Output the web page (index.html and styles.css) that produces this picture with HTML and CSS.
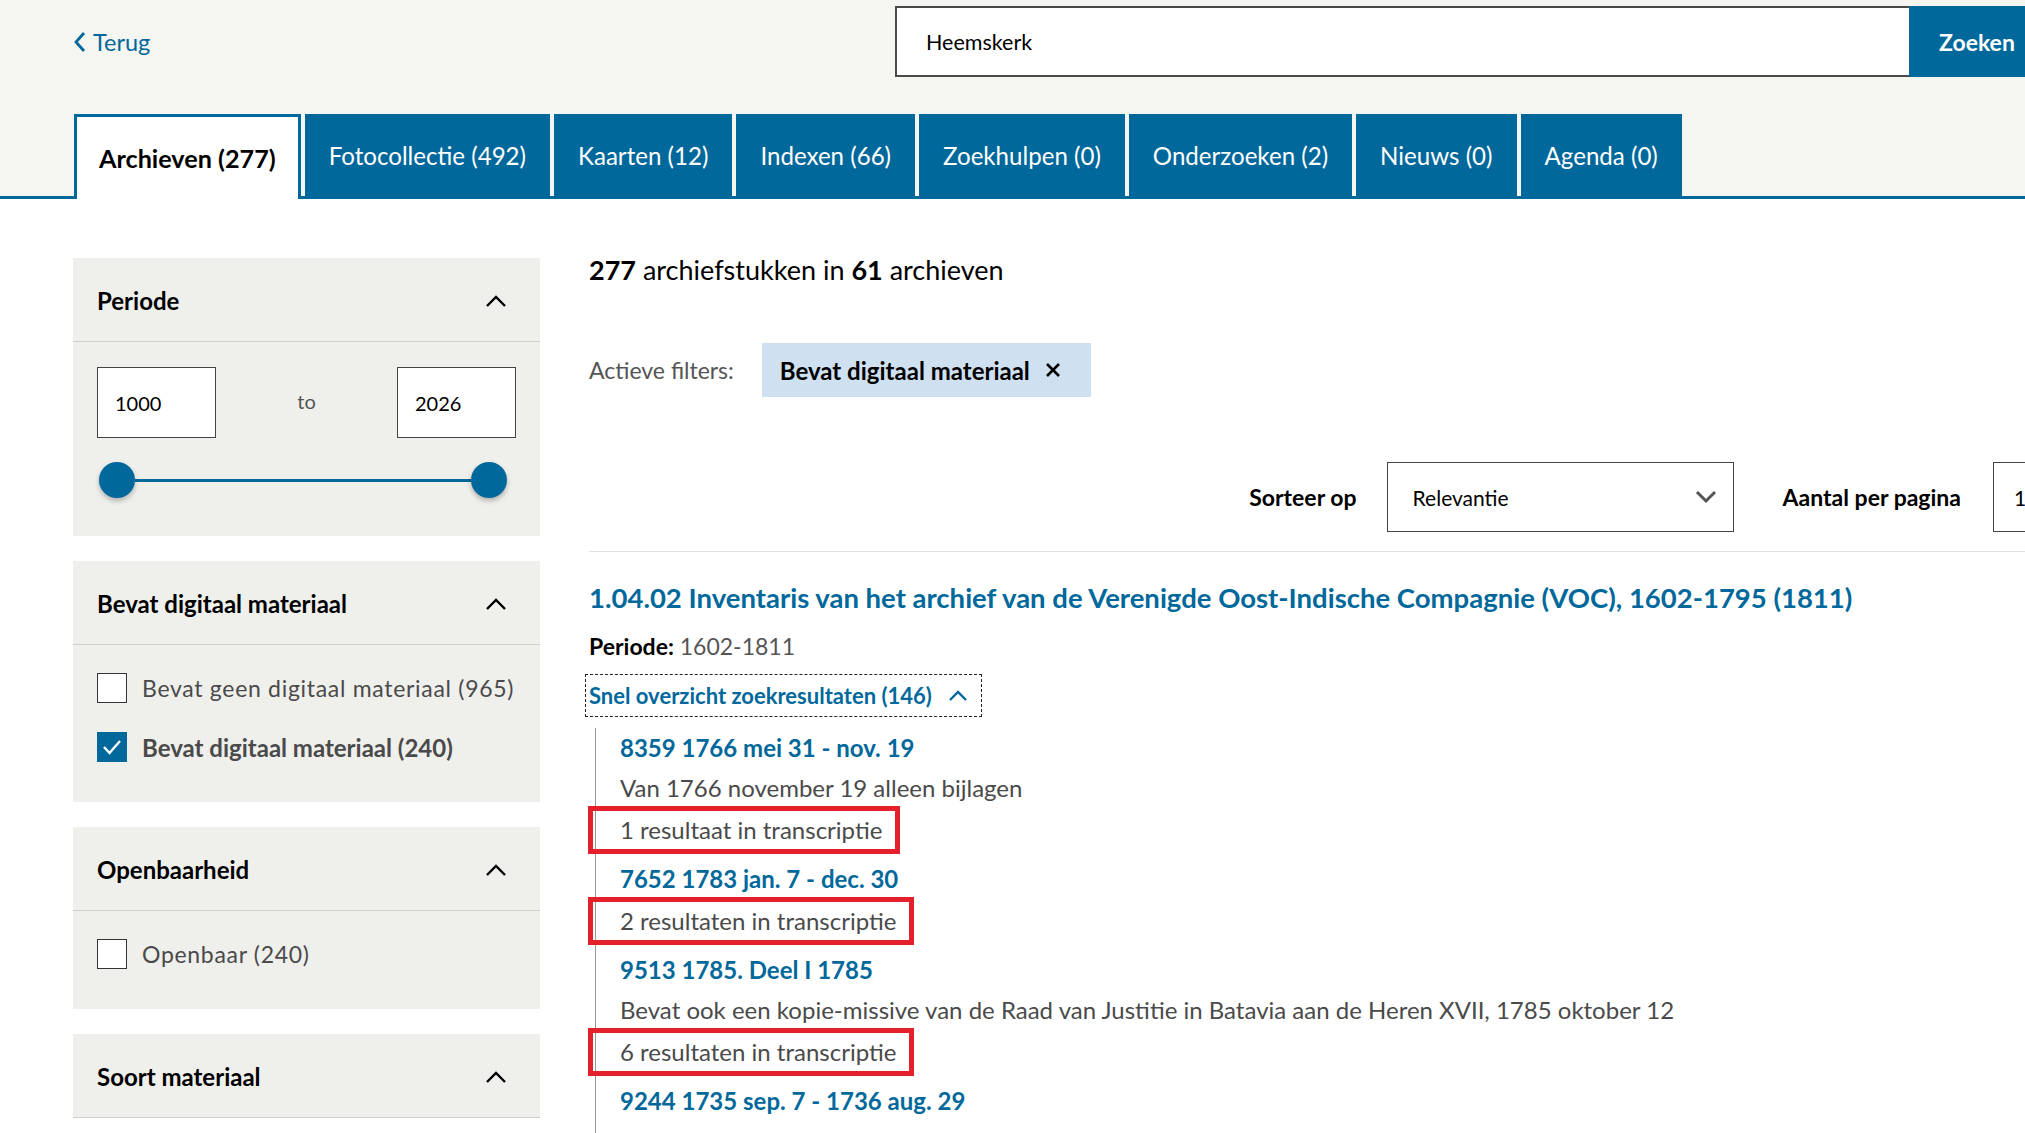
FILE: index.html
```html
<!DOCTYPE html>
<html lang="nl">
<head>
  <meta charset="UTF-8" />
  <meta name="viewport" content="width=device-width, initial-scale=1.0" />
  <title>Zoeken - Heemskerk</title>
  <link rel="stylesheet" href="styles.css">
</head>
<body>
  <div class="top">
    <div class="topbar">
      <a class="back" href="#">
        <svg width="13" height="22" viewBox="0 0 13 22"><polyline points="11,2 3,11 11,20" fill="none" stroke="#01689b" stroke-width="2.8"/></svg>
        Terug
      </a>
      <form class="search">
        <input type="text" value="Heemskerk" />
        <button type="button">Zoeken</button>
      </form>
    </div>
    <ul class="tabs">
      <li class="tab active">Archieven (277)</li>
      <li class="tab">Fotocollectie (492)</li>
      <li class="tab">Kaarten (12)</li>
      <li class="tab">Indexen (66)</li>
      <li class="tab">Zoekhulpen (0)</li>
      <li class="tab">Onderzoeken (2)</li>
      <li class="tab">Nieuws (0)</li>
      <li class="tab">Agenda (0)</li>
    </ul>
  </div>

  <main class="page">
    <aside class="filters">
      <section class="panel">
        <div class="panel-head">Periode
          <svg class="up" width="22" height="14" viewBox="0 0 22 14"><polyline points="2,12 11,3 20,12" fill="none" stroke="#000" stroke-width="2.4"/></svg>
        </div>
        <div class="panel-body period">
          <div class="range-inputs">
            <input type="text" value="1000" />
            <span>to</span>
            <input type="text" value="2026" />
          </div>
          <div class="slider">
            <span class="knob"></span>
            <span class="track"></span>
            <span class="knob"></span>
          </div>
        </div>
      </section>

      <section class="panel">
        <div class="panel-head">Bevat digitaal materiaal
          <svg class="up" width="22" height="14" viewBox="0 0 22 14"><polyline points="2,12 11,3 20,12" fill="none" stroke="#000" stroke-width="2.4"/></svg>
        </div>
        <div class="panel-body checks">
          <label class="check"><span class="box"></span>Bevat geen digitaal materiaal (965)</label>
          <label class="check on"><span class="box">
            <svg width="30" height="30" viewBox="0 0 30 30"><polyline points="7,15 12.5,21 23,9" fill="none" stroke="#fff" stroke-width="2.4"/></svg>
          </span>Bevat digitaal materiaal (240)</label>
        </div>
      </section>

      <section class="panel">
        <div class="panel-head">Openbaarheid
          <svg class="up" width="22" height="14" viewBox="0 0 22 14"><polyline points="2,12 11,3 20,12" fill="none" stroke="#000" stroke-width="2.4"/></svg>
        </div>
        <div class="panel-body checks">
          <label class="check"><span class="box"></span>Openbaar (240)</label>
        </div>
      </section>

      <section class="panel">
        <div class="panel-head">Soort materiaal
          <svg class="up" width="22" height="14" viewBox="0 0 22 14"><polyline points="2,12 11,3 20,12" fill="none" stroke="#000" stroke-width="2.4"/></svg>
        </div>
        <div class="panel-body checks"></div>
      </section>
    </aside>

    <div class="results">
      <p class="summary"><b>277</b> archiefstukken in <b>61</b> archieven</p>

      <div class="active-filters">
        <span class="label">Actieve filters:</span>
        <span class="chip">Bevat digitaal materiaal
          <svg width="16" height="16" viewBox="0 0 16 16"><path d="M2 2 L14 14 M14 2 L2 14" stroke="#000" stroke-width="2.6"/></svg>
        </span>
      </div>

      <div class="sort-row">
        <span class="sort-label">Sorteer op</span>
        <div class="select wide">Relevantie
          <svg width="22" height="14" viewBox="0 0 22 14"><polyline points="2,2 11,11 20,2" fill="none" stroke="#555" stroke-width="3"/></svg>
        </div>
        <span class="sort-label">Aantal per pagina</span>
        <div class="select small">1</div>
      </div>

      <article class="result">
        <h2 class="result-title">1.04.02 Inventaris van het archief van de Verenigde Oost-Indische Compagnie (VOC), 1602-1795 (1811)</h2>
        <p class="period-line"><b>Periode:</b> 1602-1811</p>
        <div class="overview">Snel overzicht zoekresultaten (146)
          <svg width="20" height="13" viewBox="0 0 20 13"><polyline points="2,11 10,3 18,11" fill="none" stroke="#01689b" stroke-width="2.4"/></svg>
        </div>
        <ul class="hits">
          <li class="hit-title">8359 1766 mei 31 - nov. 19</li>
          <li class="hit-desc">Van 1766 november 19 alleen bijlagen</li>
          <li class="hit-count"><span class="mark">1 resultaat in transcriptie</span></li>
          <li class="hit-title">7652 1783 jan. 7 - dec. 30</li>
          <li class="hit-count"><span class="mark">2 resultaten in transcriptie</span></li>
          <li class="hit-title">9513 1785. Deel I 1785</li>
          <li class="hit-desc">Bevat ook een kopie-missive van de Raad van Justitie in Batavia aan de Heren XVII, 1785 oktober 12</li>
          <li class="hit-count"><span class="mark">6 resultaten in transcriptie</span></li>
          <li class="hit-title">9244 1735 sep. 7 - 1736 aug. 29</li>
        </ul>
      </article>
    </div>
  </main>
</body>
</html>
```

FILE: styles.css
```css
* { margin: 0; padding: 0; box-sizing: border-box; }
body {
  font-family: 'Lato', 'Noto Sans', sans-serif;
  background: #fff;
  color: #000;
  overflow: hidden;
  width: 2025px;
  height: 1133px;
}
a { text-decoration: none; }

/* header */
.top {
  background: #f5f5f2;
}
.topbar {
  display: grid;
  grid-template-columns: 822px 1014px 140px;
  align-items: center;
  padding: 6px 0 0 73px;
}
.back {
  display: flex;
  align-items: center;
  gap: 7px;
  color: #01689b;
  font-size: 23.5px;
}
.search {
  display: flex;
  width: 1160px;
}
.search input {
  width: 1014px;
  height: 71px;
  border: 2px solid #4a4a4a;
  border-right: none;
  padding: 0 29px;
  font-family: inherit;
  font-size: 21.5px;
  color: #000;
  background: #fff;
}
.search button {
  width: 146px;
  height: 71px;
  border: none;
  background: #01689b;
  color: #fff;
  font-family: inherit;
  font-weight: bold;
  font-size: 23px;
  text-align: left;
  padding-left: 30px;
}
.tabs {
  list-style: none;
  display: flex;
  align-items: flex-end;
  gap: 4px;
  margin-top: 37px;
  padding-left: 74px;
  border-bottom: 3px solid #01689b;
  height: 85px;
}
.tab {
  height: 82px;
  background: #01689b;
  color: #fff;
  font-size: 24.1px;
  padding: 0 24px;
  display: flex;
  align-items: center;
}
.tab.active {
  height: 85px;
  margin-bottom: -3px;
  background: #fff;
  color: #000;
  font-weight: bold;
  font-size: 25.2px;
  border: 3px solid #01689b;
  border-bottom: none;
  padding: 0 22px;
}

/* layout */
.page {
  display: grid;
  grid-template-columns: 467px 1500px;
  column-gap: 49px;
  padding: 59px 0 0 73px;
}

/* filters */
.filters {
  display: flex;
  flex-direction: column;
  gap: 25px;
}
.panel {
  background: #efefec;
}
.panel-head {
  height: 84px;
  display: flex;
  align-items: center;
  justify-content: space-between;
  padding: 2px 33px 0 24px;
  font-weight: bold;
  font-size: 24px;
  border-bottom: 1px solid #cfcfcc;
}
.panel-body.period {
  padding: 25px 24px 38px;
}
.range-inputs {
  display: flex;
  align-items: center;
  justify-content: space-between;
}
.range-inputs input {
  width: 119px;
  height: 71px;
  border: 1px solid #444;
  padding: 0 17px;
  font-family: inherit;
  font-size: 20px;
  color: #000;
  background: #fff;
}
.range-inputs span {
  color: #555;
  font-size: 20px;
  margin-top: -4px;
}
.slider {
  display: flex;
  align-items: center;
  margin-top: 24px;
  padding: 0 9px 0 2px;
}
.knob {
  width: 36px;
  height: 36px;
  border-radius: 50%;
  background: #01689b;
  box-shadow: 0 3px 5px rgba(0, 0, 0, 0.25);
  flex: none;
}
.track {
  flex: 1;
  height: 3px;
  background: #01689b;
}
.panel-body.checks {
  padding: 28px 24px 40px;
  display: flex;
  flex-direction: column;
  gap: 29px;
}
.panel:last-child .panel-body.checks {
  padding: 0;
}
.check {
  display: flex;
  align-items: center;
  gap: 15px;
  font-size: 23px;
  letter-spacing: 0.7px;
  color: #4a4a4a;
}
.check.on {
  font-weight: bold;
  font-size: 24px;
  letter-spacing: 0;
}
.box {
  width: 30px;
  height: 30px;
  border: 1px solid #333;
  background: #fff;
  flex: none;
}
.check.on .box {
  background: #01689b;
  border-color: #01689b;
}
.box svg { display: block; margin: -1px; }

/* results */
.summary {
  font-size: 27px;
  line-height: 32px;
  margin-top: -4px;
}
.active-filters {
  display: flex;
  align-items: center;
  gap: 28px;
  margin-top: 57px;
}
.active-filters .label {
  color: #555;
  font-size: 23px;
}
.chip {
  display: flex;
  align-items: center;
  gap: 15px;
  height: 54px;
  padding: 0 30px 0 18px;
  background: #cfe0f1;
  font-weight: bold;
  font-size: 24px;
}
.sort-row {
  display: flex;
  align-items: center;
  justify-content: flex-end;
  margin-top: 65px;
  padding-bottom: 19px;
  border-bottom: 1px solid #e2e2e2;
}
.sort-label {
  font-weight: bold;
  font-size: 23px;
  margin-right: 30px;
}
.select {
  height: 70px;
  border: 1px solid #444;
  display: flex;
  align-items: center;
  justify-content: space-between;
  padding: 0 16px 0 25px;
  font-size: 21px;
}
.select.wide {
  width: 347px;
  margin-right: 49px;
}
.select.small {
  width: 96px;
  margin-left: 2px;
  padding-left: 20px;
}
.result-title {
  margin-top: 29px;
  color: #01689b;
  font-size: 27.5px;
  line-height: 34px;
}
.period-line {
  margin-top: 16px;
  font-size: 23px;
  line-height: 30px;
  color: #555;
}
.period-line b { color: #000; }
.overview {
  display: inline-flex;
  align-items: center;
  gap: 16px;
  margin: 13px 0 0 -4px;
  height: 43px;
  padding: 0 13px 0 3px;
  border: 1px dashed #222;
  color: #01689b;
  font-weight: bold;
  font-size: 22px;
}
.hits {
  list-style: none;
  margin: 11px 0 0 6px;
  padding: 0 0 40px 24px;
  border-left: 1px solid #999;
}
.hits li {
  line-height: 40px;
  font-size: 24px;
}
.hit-title {
  color: #01689b;
  font-weight: bold;
}
.hit-desc {
  color: #4a4a4a;
}
.hit-count {
  color: #4a4a4a;
  margin: 2px 0 9px;
}
.mark {
  position: relative;
  display: inline-block;
}
.mark::after {
  content: "";
  position: absolute;
  top: -4px;
  bottom: -4px;
  left: -32px;
  right: -18px;
  border: 5px solid #e4202a;
}
```
